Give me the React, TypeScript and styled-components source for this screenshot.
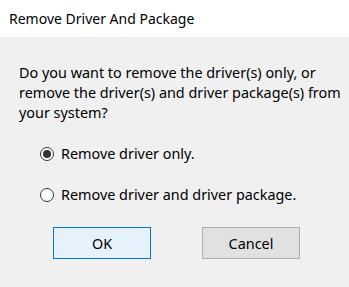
import React, { useState } from 'react';
import styled, { createGlobalStyle } from 'styled-components';

const GlobalStyle = createGlobalStyle`
  html, body {
    margin: 0;
    padding: 0;
    background: #f0f0f0;
  }
  body {
    font-family: "Noto Sans", "Open Sans", sans-serif;
  }
`;

const Dialog = styled.div`
  width: 349px;
  height: 287px;
  display: flex;
  flex-direction: column;
  background: #f0f0f0;
  color: #000;
`;

const TitleBar = styled.div`
  height: 37px;
  flex-shrink: 0;
  display: flex;
  align-items: center;
  padding-left: 9px;
  background: #fff;
  font-size: 14px;
  box-sizing: border-box;
`;

const Body = styled.div`
  display: flex;
  flex-direction: column;
  padding: 26px 0 0 19px;
`;

const Question = styled.p`
  margin: 0;
  font-size: 14.4px;
  line-height: 20px;
  width: 322px;
`;

const Options = styled.div`
  display: flex;
  flex-direction: column;
  gap: 20px;
  margin: 20px 0 0 21px;
`;

const Option = styled.label`
  display: flex;
  align-items: center;
  gap: 7px;
  font-size: 14.4px;
  line-height: 21px;
  cursor: default;
`;

const RadioCircle = styled.span<{ $checked: boolean }>`
  width: 14px;
  height: 14px;
  box-sizing: border-box;
  border-radius: 50%;
  border: 1px solid #333;
  background: #fff;
  display: flex;
  align-items: center;
  justify-content: center;

  &::after {
    content: '';
    width: 8px;
    height: 8px;
    border-radius: 50%;
    background: #333;
    display: ${p => (p.$checked ? 'block' : 'none')};
  }
`;

const Buttons = styled.div`
  display: flex;
  gap: 51px;
  margin: 22px 0 0 34px;
`;

const Button = styled.button<{ $primary?: boolean }>`
  width: 98px;
  height: 32px;
  box-sizing: border-box;
  font-family: inherit;
  font-size: 14.4px;
  color: #000;
  border: 1px solid ${p => (p.$primary ? '#0078d7' : '#adadad')};
  background: ${p => (p.$primary ? '#e5f1fb' : '#e1e1e1')};
  padding: 0;
`;

export default function App() {
  const [choice, setChoice] = useState(0);
  const options = ['Remove driver only.', 'Remove driver and driver package.'];

  return (
    <Dialog>
      <GlobalStyle />
      <TitleBar>Remove Driver And Package</TitleBar>
      <Body>
        <Question>
          Do you want to remove the driver(s) only, or remove the driver(s) and driver package(s) from
          your system?
        </Question>
        <Options>
          {options.map((label, i) => (
            <Option key={label} onClick={() => setChoice(i)}>
              <RadioCircle $checked={choice === i} />
              {label}
            </Option>
          ))}
        </Options>
        <Buttons>
          <Button $primary>OK</Button>
          <Button>Cancel</Button>
        </Buttons>
      </Body>
    </Dialog>
  );
}
